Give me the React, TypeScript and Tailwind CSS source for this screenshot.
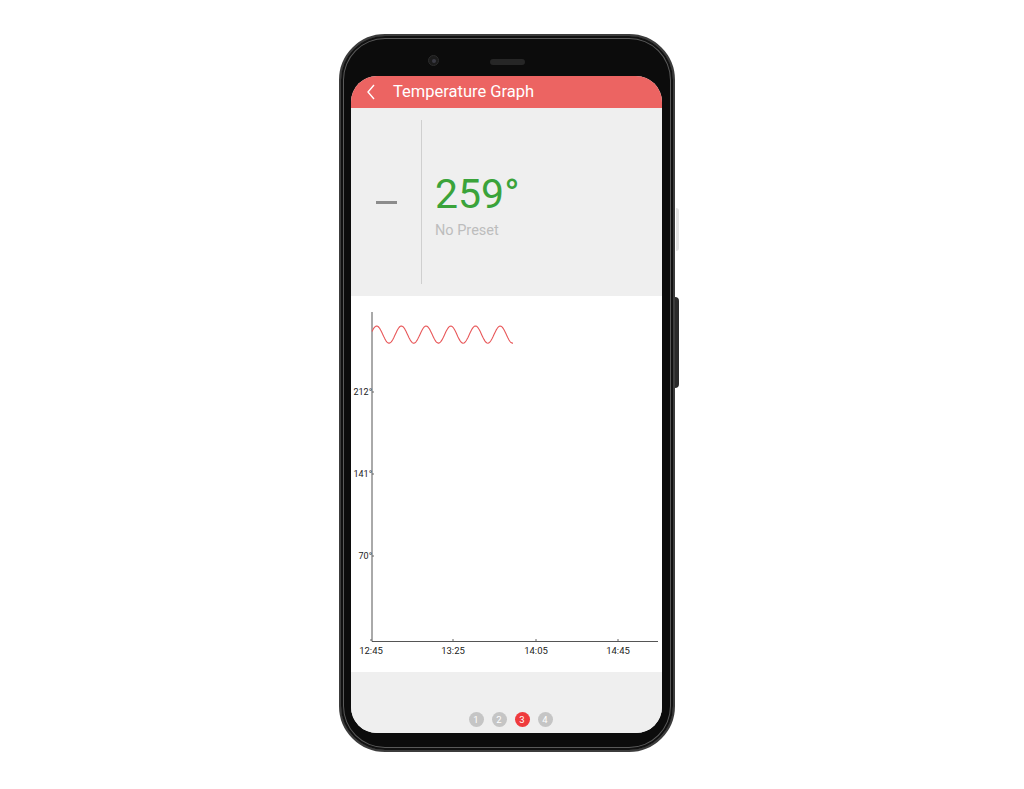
import React from 'react';

const wavePoints = (() => {
  const pts: string[] = [];
  for (let x = 21; x <= 162; x += 1) {
    const y = 38.6 - 8.6 * Math.sin((2 * Math.PI * (x - 19.5)) / 24.7);
    pts.push(`${x},${y.toFixed(1)}`);
  }
  return pts.join(' ');
})();

const yLabels = [
  { label: '212°', y: 96 },
  { label: '141°', y: 178 },
  { label: '70°', y: 260 },
];

const xLabels = [
  { label: '12:45', x: 20 },
  { label: '13:25', x: 102 },
  { label: '14:05', x: 185 },
  { label: '14:45', x: 267 },
];

const Chart: React.FC = () => (
  <svg width="311" height="376" viewBox="0 0 311 376" className="block">
    <line x1="21" y1="16" x2="21" y2="345.5" stroke="#555" strokeWidth="1" />
    <line x1="21" y1="345.5" x2="307" y2="345.5" stroke="#555" strokeWidth="1" />
    {yLabels.map((l) => (
      <g key={l.label}>
        <line x1="21" y1={l.y} x2="23" y2={l.y} stroke="#666" strokeWidth="1" />
        <text x="21" y={l.y + 3} textAnchor="end" fontSize="9" fill="#222" fontFamily="Roboto, sans-serif">
          {l.label}
        </text>
      </g>
    ))}
    {xLabels.map((l) => (
      <g key={l.label}>
        <line x1={l.x} y1="343" x2={l.x} y2="345" stroke="#666" strokeWidth="1" />
        <text x={l.x} y="357.5" textAnchor="middle" fontSize="9.5" fill="#222" fontFamily="Roboto, sans-serif">
          {l.label}
        </text>
      </g>
    ))}
    <polyline points={wavePoints} fill="none" stroke="#e8585a" strokeWidth="1.1" strokeLinejoin="round" />
  </svg>
);

const PageDots: React.FC = () => (
  <div className="flex justify-center gap-[8px] pt-[40px] pl-[8px]">
    {[1, 2, 3, 4].map((n) => (
      <div
        key={n}
        className={`w-[15px] h-[15px] rounded-full flex items-center justify-center text-[9.5px] leading-none text-white ${
          n === 3 ? 'bg-[#ef3b3d]' : 'bg-[#c5c5c5]'
        }`}
      >
        {n}
      </div>
    ))}
  </div>
);

export default function App() {
  return (
    <div className="w-[1024px] h-[789px] bg-white overflow-hidden" style={{ fontFamily: 'Roboto, "Liberation Sans", sans-serif' }}>
      <div className="relative ml-[339px] mt-[34px] w-[336px] h-[718px]">
        {/* side buttons */}
        <div className="absolute right-[-4px] top-[174px] w-[3px] h-[43px] bg-[#e4e4e4] rounded-r-sm" />
        <div className="absolute right-[-4px] top-[263px] w-[4px] h-[91px] bg-[#2a2a2a] rounded-r-sm" />

        <div className="w-full h-full rounded-[46px] bg-[#0c0c0c] border-[2px] border-[#3c3c3c] shadow-[inset_0_0_0_2px_#111,inset_0_0_0_3px_#5a5a5a] flex flex-col pt-[40px] pb-[17px] pl-[10px] pr-[11px]">
          {/* camera + speaker */}
          <div className="relative h-0">
            <div className="absolute left-[77px] top-[-21px] w-[11px] h-[11px] rounded-full bg-[#1b1b1b] border border-[#2c2c2c] flex items-center justify-center">
              <div className="w-[4px] h-[4px] rounded-full bg-[#3a3a44]" />
            </div>
            <div className="absolute left-[139px] top-[-17px] w-[35px] h-[6px] rounded-full bg-[#262626]" />
          </div>

          <div className="flex-1 rounded-[26px] overflow-hidden bg-[#efefef] flex flex-col">
            {/* header */}
            <div className="h-[32px] bg-[#ec6462] flex items-center text-white shrink-0">
              <svg width="10" height="16" viewBox="0 0 10 16" className="ml-[15px]">
                <polyline points="8,1 2,8 8,15" fill="none" stroke="white" strokeWidth="1.4" />
              </svg>
              <span className="ml-[17px] text-[16.5px] leading-none">Temperature Graph</span>
            </div>

            {/* current reading */}
            <div className="h-[188px] bg-[#efefef] flex shrink-0">
              <div className="w-[70px] flex items-center justify-center">
                <div className="w-[21px] h-[3px] bg-[#8c8c8c]" />
              </div>
              <div className="my-[12px] w-px bg-[#cfcfcf]" />
              <div className="flex flex-col justify-center pl-[13px] pt-[8px]">
                <div className="text-[41px] leading-none text-[#3aa33a]">259°</div>
                <div className="mt-[9px] text-[14.5px] leading-none text-[#bdbdbd]">No Preset</div>
              </div>
            </div>

            {/* chart */}
            <div className="h-[376px] bg-white shrink-0">
              <Chart />
            </div>

            {/* footer */}
            <div className="flex-1 bg-[#efefef]">
              <PageDots />
            </div>
          </div>
        </div>
      </div>
    </div>
  );
}
